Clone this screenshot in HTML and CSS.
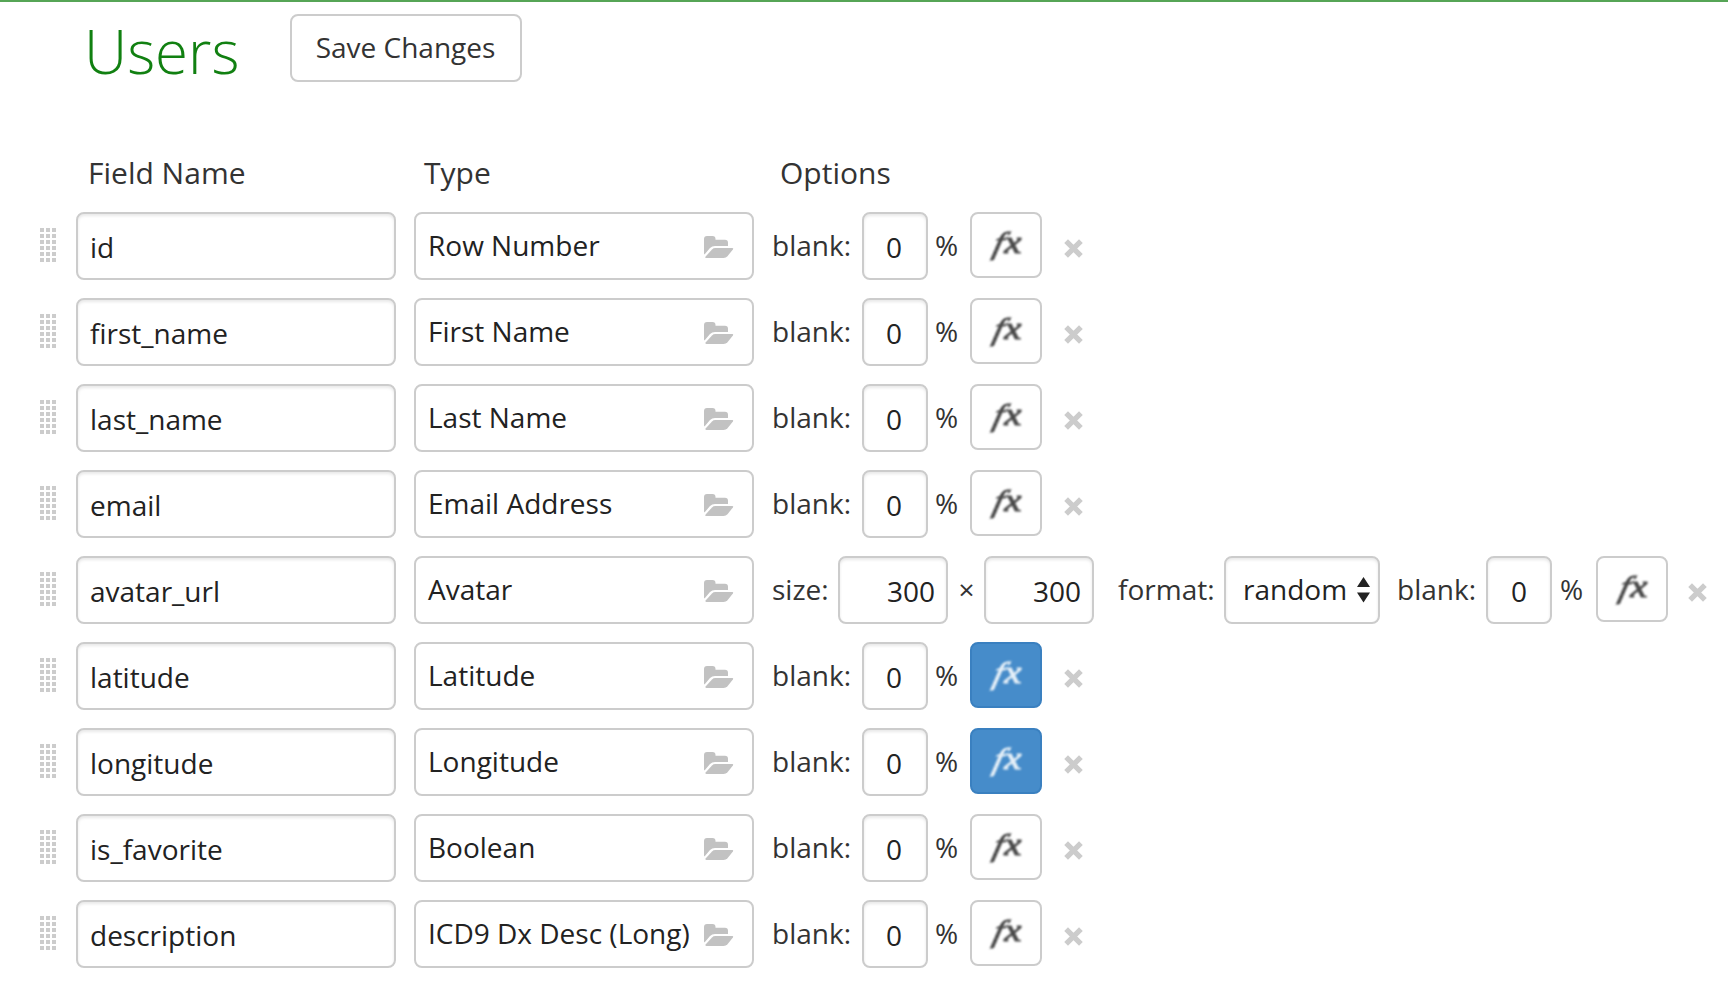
FILE: index.html
```html
<!DOCTYPE html>
<html lang="en">
<head>
<meta charset="utf-8">
<title>Users</title>
<link rel="stylesheet" href="styles.css">
</head>
<body>
<svg width="0" height="0" class="sprites">
  <symbol id="folder" viewBox="0 0 30 22"><path d="M0 17.500V3Q0 0 3 0H8.500Q11.500 0 11.500 3V3.800H21Q24 3.800 24 6.800V10H11Q8 10 6 12L0.500 18.500Z"/><path d="M1.600 20.600L8 13.400Q9.300 12 11.500 12H28.200Q29.900 12 28.900 13.400L23.500 20.200Q22 22 19.500 22H2.300Q0.800 22 1.600 20.600Z"/></symbol>
  <symbol id="cross" viewBox="0 0 18 18"><path d="M2 2L16 16M16 2L2 16" fill="none" stroke="currentColor" stroke-width="5"/></symbol>
  <symbol id="grip" viewBox="0 0 16 34"><path d="M2 0V34M8 0V34M14 0V34" fill="none" stroke="currentColor" stroke-width="4" stroke-dasharray="4 2"/></symbol>
</svg>
<header class="top">
  <h1 class="title">Users</h1>
  <button class="save">Save Changes</button>
</header>
<div class="heads"><span class="h-name">Field Name</span><span class="h-type">Type</span><span>Options</span></div>
<main class="rows" id="rows"></main>
<script src="rows.js"></script>
</body>
</html>
```
FILE: rows.js
```js
const fields = [
  ["id", "Row Number"],
  ["first_name", "First Name"],
  ["last_name", "Last Name"],
  ["email", "Email Address"],
  ["avatar_url", "Avatar"],
  ["latitude", "Latitude", true],
  ["longitude", "Longitude", true],
  ["is_favorite", "Boolean"],
  ["description", "ICD9 Dx Desc (Long)"]
];
const avatarOptions = `
  <span class="label size">size:</span><div class="box num dim">300</div>
  <span class="label times">×</span><div class="box num dim">300</div>
  <span class="label format">format:</span>
  <div class="box select"><span>random</span><svg class="arrows" viewBox="0 0 13 26"><path d="M0 10L6.500 0L13 10ZM0 15.500H13L6.500 25.500Z"/></svg></div>`;
document.getElementById("rows").innerHTML = fields.map(([name, type, active]) => {
  const avatar = type === "Avatar";
  return `<div class="row${avatar ? " avatar" : ""}">
    <svg class="grip"><use href="#grip"/></svg>
    <div class="box name">${name}</div>
    <div class="box type"><span>${type}</span><svg class="folder"><use href="#folder"/></svg></div>
    ${avatar ? avatarOptions : ""}
    <span class="label blank">blank:</span><div class="box num pct">0</div>
    <span class="label sign">%</span>
    <button class="fx${active ? " active" : ""}"><span class="f">f</span><span class="x">x</span></button>
    <svg class="cross"><use href="#cross"/></svg>
  </div>`;
}).join("");
```
FILE: styles.css
```css
* { box-sizing: border-box; }
body {
  margin: 0;
  height: 984px;
  overflow: hidden;
  border-top: 2px solid #56a556;
  background: #fff;
  color: #333;
  font: 28px/38px "Open Sans", sans-serif;
}
.sprites { display: block; }
.top { display: flex; height: 138px; padding: 12px 0 0 84px; }
.title { margin: 0; width: 206px; color: #118011; font-size: 60px; font-weight: 300; line-height: 74px; }
.save {
  width: 232px; height: 68px; padding: 0 1px 2px 0;
  border: 2px solid #ccc; border-radius: 8px;
  background: #fff; color: #333; font: inherit;
}
.heads { display: flex; height: 72px; padding-left: 88px; font-size: 30px; line-height: 66px; }
.h-name { width: 336px; }
.h-type { width: 356px; }
.rows { display: flex; flex-direction: column; gap: 18px; }
.row { display: flex; height: 68px; padding-left: 40px; white-space: nowrap; }
.grip { width: 16px; height: 34px; margin: 16px 20px 0 0; color: #ccc; }
.box {
  height: 68px;
  border: 2px solid #ccc; border-radius: 8px;
  color: #222; line-height: 38px;
}
.name, .num, .select { box-shadow: inset 0 2px 3px rgba(0, 0, 0, .09); }
.name { width: 320px; margin-right: 18px; padding: 14px 12px; }
.type { display: flex; justify-content: space-between; width: 340px; padding: 12px 18px 0 12px; }
.folder { width: 30px; height: 22px; margin-top: 10px; fill: #c2c2c2; }
.label { padding-top: 14px; }
.blank { width: 108px; padding-left: 18px; }
.num { padding-top: 14px; }
.pct { width: 66px; padding-right: 2px; text-align: center; }
.sign { width: 42px; padding-left: 7px; }
.fx {
  display: flex; justify-content: center;
  width: 72px; height: 66px; padding: 11px 0 0 1px;
  border: 2px solid #ccc; border-radius: 8px;
  background: #fff; color: #484848;
  font: italic 400 31px/36px "Liberation Serif", serif;
}
.fx span { filter: blur(.8px); -webkit-text-stroke: 1px currentColor; }
.f { transform: skewX(-14deg) scaleX(1.1); }
.fx .x { margin-left: 4px; transform: scaleX(1.25); }
.fx.active { border-color: #3a80c0; background: #468cca; color: #e6f0f8; }
.cross { width: 19px; height: 19px; margin: 27px 0 0 21.5px; color: #ccc; }
.size { width: 84px; padding-left: 18px; }
.dim { width: 110px; padding-right: 11px; text-align: right; }
.times { width: 36px; padding-left: 1px; text-align: center; }
.format { width: 130px; padding-left: 24px; }
.select { display: flex; width: 156px; padding: 12px 0 0 17px; }
.arrows { width: 13px; height: 26px; margin: 7px 0 0 10px; fill: #222; }
.avatar .blank { width: 106px; padding-left: 17px; }
.avatar .pct { padding-right: 0; }
.avatar .sign { width: 44px; padding-left: 8px; }
.avatar .cross { margin-left: 20px; }
```
